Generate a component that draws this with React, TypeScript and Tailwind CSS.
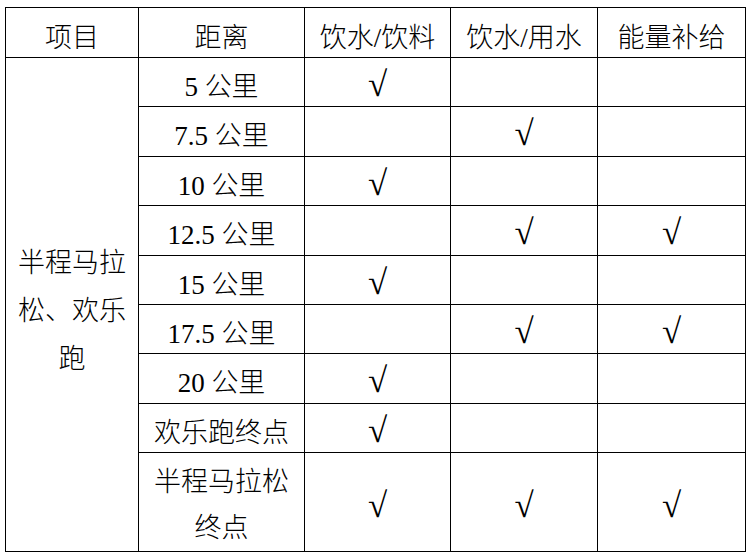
import React from "react";

const font = {
  fontFamily: '"Liberation Serif", "Noto Sans CJK SC", serif',
};

type Row = {
  distance: string;
  drink: boolean;
  water: boolean;
  energy: boolean;
  tall?: boolean;
};

const rows: Row[] = [
  { distance: "5 公里", drink: true, water: false, energy: false },
  { distance: "7.5 公里", drink: false, water: true, energy: false },
  { distance: "10 公里", drink: true, water: false, energy: false },
  { distance: "12.5 公里", drink: false, water: true, energy: true },
  { distance: "15 公里", drink: true, water: false, energy: false },
  { distance: "17.5 公里", drink: false, water: true, energy: true },
  { distance: "20 公里", drink: true, water: false, energy: false },
  { distance: "欢乐跑终点", drink: true, water: false, energy: false },
  { distance: "半程马拉松终点", drink: true, water: true, energy: true, tall: true },
];

const base = "border border-black text-center px-2 pb-0 font-light";
const single = `${base} align-top pt-[10px] leading-[38px]`;
const tallCell = `${base} align-top pt-[6px] leading-[46px]`;
const head = `${base} align-top pt-[12px] leading-[37px]`;
const checkCell = `${base} align-top pt-[8px] leading-[38px]`;
const checkTall = `${base} align-middle pt-[8px] leading-[38px]`;

const Check = ({ on }: { on: boolean }) =>
  on ? (
    <span className="inline-block align-top h-[38px] leading-[38px] text-[35px]">√</span>
  ) : null;

export default function App() {
  return (
    <div className="w-[750px] h-[555px] bg-white pl-[5px] pt-[7px]" style={font}>
      <table className="border-collapse table-fixed w-[740px] text-[27px] text-black">
        <colgroup>
          <col className="w-[133px]" />
          <col className="w-[166px]" />
          <col className="w-[146px]" />
          <col className="w-[147px]" />
          <col className="w-[148px]" />
        </colgroup>
        <thead>
          <tr className="h-[50px]">
            <th className={head}>项目</th>
            <th className={head}>距离</th>
            <th className={head}>饮水/饮料</th>
            <th className={head}>饮水/用水</th>
            <th className={head}>能量补给</th>
          </tr>
        </thead>
        <tbody>
          {rows.map((r, i) => {
            const cls = r.tall ? tallCell : single;
            const checkCls = r.tall ? checkTall : checkCell;
            return (
              <tr key={r.distance} className={r.tall ? "h-[98px]" : "h-[49.4px]"}>
                {i === 0 && (
                  <td
                    rowSpan={rows.length}
                    className={`${base} align-middle pt-[12px] leading-[48px]`}
                  >
                    半程马拉松、欢乐跑
                  </td>
                )}
                <td className={cls}>{r.distance}</td>
                <td className={checkCls}>
                  <Check on={r.drink} />
                </td>
                <td className={checkCls}>
                  <Check on={r.water} />
                </td>
                <td className={checkCls}>
                  <Check on={r.energy} />
                </td>
              </tr>
            );
          })}
        </tbody>
      </table>
    </div>
  );
}
